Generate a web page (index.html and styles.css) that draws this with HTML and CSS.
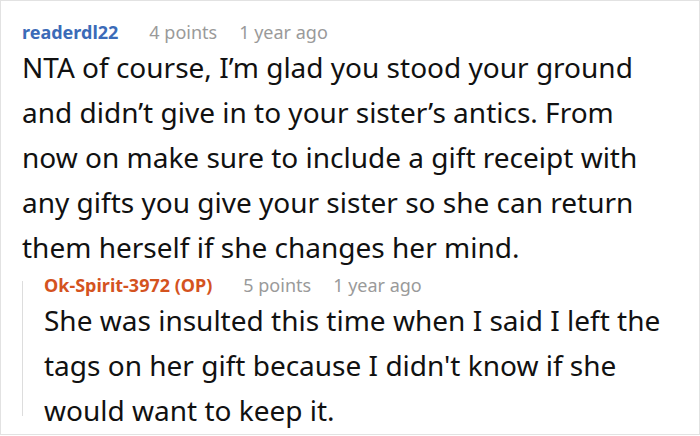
FILE: index.html
```html
<!DOCTYPE html>
<html>
<head>
<meta charset="utf-8">
<link rel="stylesheet" href="styles.css">
</head>
<body>
<div class="frame">
  <div class="comment">
    <div class="meta">
      <span class="author">readerdl22</span>
      <span class="info">4 points</span>
      <span class="info">1 year ago</span>
    </div>
    <p class="text">NTA of course, I’m glad you stood your ground and didn’t give in to your sister’s antics. From now on make sure to include a gift receipt with any gifts you give your sister so she can return them herself if she changes her mind.</p>
    <div class="reply">
      <div class="meta">
        <span class="author op">Ok-Spirit-3972 (OP)</span>
        <span class="info">5 points</span>
        <span class="info">1 year ago</span>
      </div>
      <p class="text reply-text">She was insulted this time when I said I left the tags on her gift because I didn't know if she would want to keep it.</p>
    </div>
  </div>
</div>
</body>
</html>
```
FILE: styles.css
```css
html, body {
  margin: 0;
  padding: 0;
  background: #ffffff;
}

.frame {
  width: 700px;
  height: 435px;
  box-sizing: border-box;
  border: 1px solid #e2e2e2;
  overflow: hidden;
  font-family: "Noto Sans", "Open Sans", sans-serif;
  color: #111111;
}

.comment {
  padding: 18px 0 0 21px;
}

.meta {
  display: flex;
  font-size: 18px;
  line-height: 26px;
  white-space: nowrap;
}

.author {
  font-weight: 700;
  color: #3b6bb8;
  margin-right: 31px;
}

.author.op {
  color: #d4531f;
  margin-right: 31px;
}

.info {
  color: #9a9a9a;
  margin-right: 22px;
}

.text {
  margin: 0;
  font-size: 28px;
  line-height: 45px;
  width: 625px;
}

.reply-text {
  width: 630px;
}

.reply {
  position: relative;
  margin-top: 2px;
  padding-left: 22px;
}

.reply::before {
  content: "";
  position: absolute;
  left: 0;
  top: 9px;
  width: 1px;
  height: 135px;
  background: #dddddd;
}
```
